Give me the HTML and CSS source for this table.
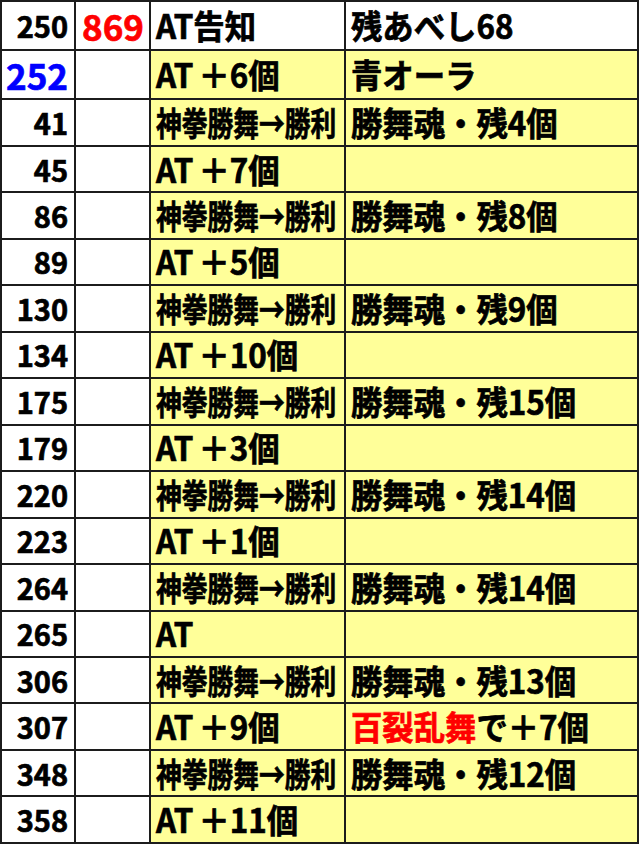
FILE: index.html
```html
<!DOCTYPE html>
<html lang="ja">
<head>
<meta charset="utf-8">
<link rel="stylesheet" href="styles.css">
</head>
<body>
<table class="log">
  <colgroup>
    <col class="c-game">
    <col class="c-total">
    <col class="c-event">
    <col class="c-note">
  </colgroup>
  <tbody>
    <tr class="head">
      <td class="num">250</td>
      <td class="big red">869</td>
      <td class="txt"><span class="t">AT告知</span></td>
      <td class="txt"><span class="t">残あべし68</span></td>
    </tr>
    <tr>
      <td class="num big blue">252</td>
      <td></td>
      <td class="txt hl"><span class="t">AT ＋6個</span></td>
      <td class="txt hl"><span class="t">青オーラ</span></td>
    </tr>
    <tr>
      <td class="num">41</td>
      <td></td>
      <td class="txt hl"><span class="t squeeze">神拳勝舞→勝利</span></td>
      <td class="txt hl"><span class="t">勝舞魂・残4個</span></td>
    </tr>
    <tr>
      <td class="num">45</td>
      <td></td>
      <td class="txt hl"><span class="t">AT ＋7個</span></td>
      <td class="txt hl"></td>
    </tr>
    <tr>
      <td class="num">86</td>
      <td></td>
      <td class="txt hl"><span class="t squeeze">神拳勝舞→勝利</span></td>
      <td class="txt hl"><span class="t">勝舞魂・残8個</span></td>
    </tr>
    <tr>
      <td class="num">89</td>
      <td></td>
      <td class="txt hl"><span class="t">AT ＋5個</span></td>
      <td class="txt hl"></td>
    </tr>
    <tr>
      <td class="num">130</td>
      <td></td>
      <td class="txt hl"><span class="t squeeze">神拳勝舞→勝利</span></td>
      <td class="txt hl"><span class="t">勝舞魂・残9個</span></td>
    </tr>
    <tr>
      <td class="num">134</td>
      <td></td>
      <td class="txt hl"><span class="t">AT ＋10個</span></td>
      <td class="txt hl"></td>
    </tr>
    <tr>
      <td class="num">175</td>
      <td></td>
      <td class="txt hl"><span class="t squeeze">神拳勝舞→勝利</span></td>
      <td class="txt hl"><span class="t">勝舞魂・残15個</span></td>
    </tr>
    <tr>
      <td class="num">179</td>
      <td></td>
      <td class="txt hl"><span class="t">AT ＋3個</span></td>
      <td class="txt hl"></td>
    </tr>
    <tr>
      <td class="num">220</td>
      <td></td>
      <td class="txt hl"><span class="t squeeze">神拳勝舞→勝利</span></td>
      <td class="txt hl"><span class="t">勝舞魂・残14個</span></td>
    </tr>
    <tr>
      <td class="num">223</td>
      <td></td>
      <td class="txt hl"><span class="t">AT ＋1個</span></td>
      <td class="txt hl"></td>
    </tr>
    <tr>
      <td class="num">264</td>
      <td></td>
      <td class="txt hl"><span class="t squeeze">神拳勝舞→勝利</span></td>
      <td class="txt hl"><span class="t">勝舞魂・残14個</span></td>
    </tr>
    <tr>
      <td class="num">265</td>
      <td></td>
      <td class="txt hl"><span class="t">AT</span></td>
      <td class="txt hl"></td>
    </tr>
    <tr>
      <td class="num">306</td>
      <td></td>
      <td class="txt hl"><span class="t squeeze">神拳勝舞→勝利</span></td>
      <td class="txt hl"><span class="t">勝舞魂・残13個</span></td>
    </tr>
    <tr>
      <td class="num">307</td>
      <td></td>
      <td class="txt hl"><span class="t">AT ＋9個</span></td>
      <td class="txt hl"><span class="t"><span class="red">百裂乱舞</span>で＋7個</span></td>
    </tr>
    <tr>
      <td class="num">348</td>
      <td></td>
      <td class="txt hl"><span class="t squeeze">神拳勝舞→勝利</span></td>
      <td class="txt hl"><span class="t">勝舞魂・残12個</span></td>
    </tr>
    <tr>
      <td class="num">358</td>
      <td></td>
      <td class="txt hl"><span class="t">AT ＋11個</span></td>
      <td class="txt hl"></td>
    </tr>
  </tbody>
</table>
</body>
</html>
```

FILE: styles.css
```css
html, body {
  margin: 0;
  padding: 0;
  background: #ffffff;
}

.log {
  table-layout: fixed;
  width: 639px;
  height: 844px;
  border-collapse: separate;
  border-spacing: 2px;
  background: #1c1c1c;
  font-family: "Noto Sans CJK JP", "Noto Sans", sans-serif;
  font-weight: 700;
  font-size: 29px;
  color: #000;
  -webkit-text-stroke-width: 0.7px;
}

.c-game { width: 72px; }
.c-total { width: 73px; }
.c-event { width: 193px; }
.c-note { width: 291px; }

.log td {
  background: #ffffff;
  padding: 0 6px;
  white-space: nowrap;
  overflow: visible;
  vertical-align: middle;
  line-height: 1;
}

.log td.hl {
  background: #ffff99;
}

.num {
  text-align: right;
}

.log td.num {
  padding-right: 6px;
  padding-left: 2px;
}

.txt {
  text-align: left;
  font-size: 33px;
}

.log td.txt {
  padding-left: 5px;
}

.t {
  display: inline-block;
  transform: scaleX(0.95);
  transform-origin: left center;
  word-spacing: -2px;
}

.t.squeeze {
  transform: scaleX(0.78);
}

.big {
  font-size: 35px;
}

.red {
  color: #ff0000;
}

.blue {
  color: #0000ff;
}
```
